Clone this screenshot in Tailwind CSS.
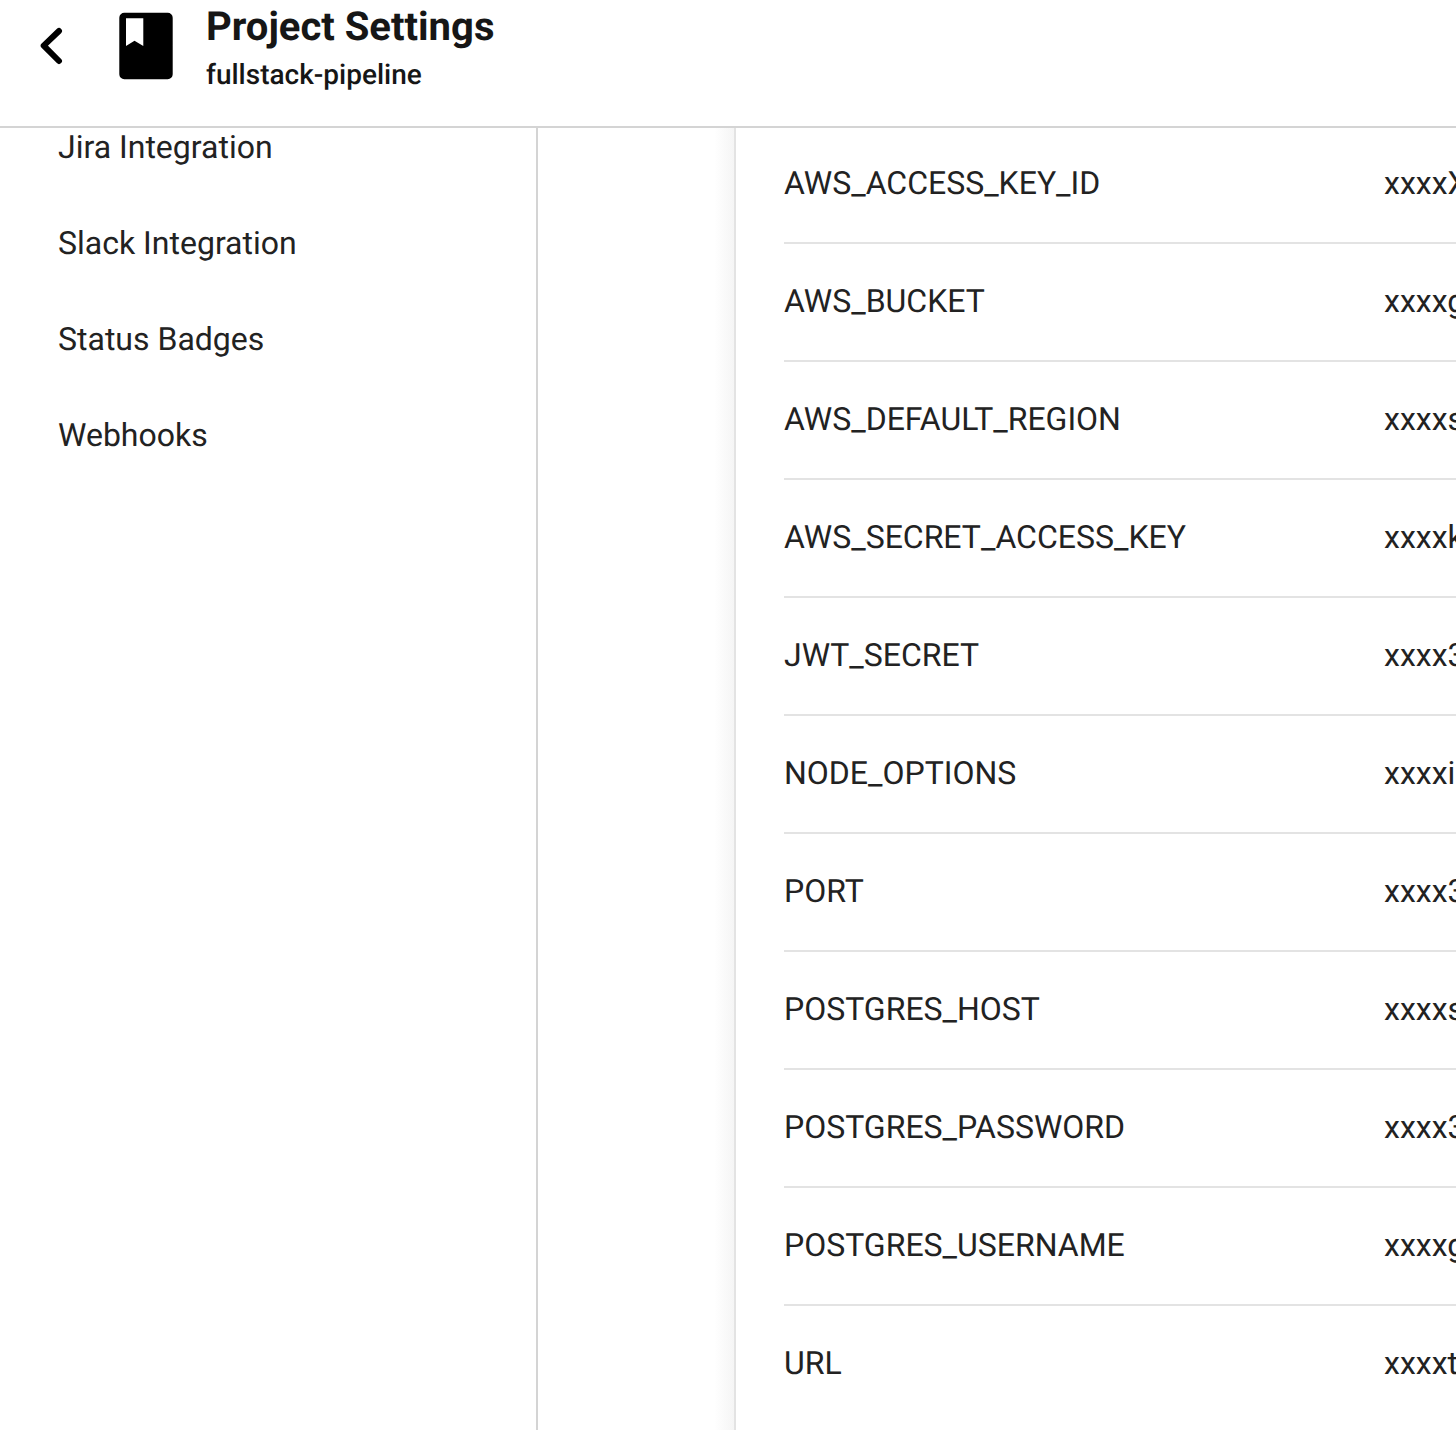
<!DOCTYPE html>
<html>
<head>
<meta charset="utf-8">
<script src="https://cdn.jsdelivr.net/npm/@tailwindcss/browser@4"></script>
</head>
<body class="bg-white">
<div class="w-[1456px] h-[1430px] overflow-hidden flex flex-col font-['Roboto',sans-serif] text-[#161616] [text-rendering:geometricPrecision] antialiased">
  <header class="h-[128px] shrink-0 border-b-2 border-[#d4d4d4] flex items-start bg-white relative z-10">
    <svg class="ml-[40px] mt-[27px] w-[24px] h-[38px] shrink-0" viewBox="0 0 24 38" fill="none"><path d="M19 4 3.7 18.7 19 34" stroke="#000" stroke-width="6" stroke-linecap="round" stroke-linejoin="round"/></svg>
    <svg class="ml-[55px] mt-[12px] w-[54px] h-[68px] shrink-0" viewBox="0 0 54 68"><path fill-rule="evenodd" d="M5.3 .7H48.7A5 5 0 0 1 53.7 5.7V62.3A5 5 0 0 1 48.7 67.3H5.3A5 5 0 0 1 .3 62.3V5.7A5 5 0 0 1 5.3 .7ZM7 6.3V34L15.5 28.7 24.3 34V6.3Z" fill="#000"/></svg>
    <div class="ml-[33px] flex flex-col">
      <div class="text-[40px] leading-[54px] font-bold whitespace-nowrap">Project Settings</div>
      <div class="text-[28px] leading-[40px] font-medium whitespace-nowrap pt-[1px]">fullstack-pipeline</div>
    </div>
  </header>
  <div class="flex flex-1 min-h-0">
    <nav class="w-[538px] shrink-0 border-r-2 border-[#d4d4d4] pl-[58px] text-[32px] text-[#222] overflow-hidden">
      <div class="-mt-[29px] flex flex-col">
        <div class="h-24 flex items-center">Jira Integration</div>
        <div class="h-24 flex items-center">Slack Integration</div>
        <div class="h-24 flex items-center">Status Badges</div>
        <div class="h-24 flex items-center">Webhooks</div>
      </div>
    </nav>
    <div class="w-[196px] shrink-0 bg-gradient-to-r from-white from-[90%] to-[#f5f5f5]"></div>
    <main class="flex-1 min-w-0 border-l-2 border-[#e3e3e3] pl-[48px] overflow-hidden text-[32px] text-[#222]">
      <div class="-mt-[2px] flex flex-col">
        <div class="h-[118px] shrink-0 flex items-center pb-[2px] border-b-2 border-[#e3e3e3] whitespace-nowrap"><span class="w-[600px] shrink-0">AWS_ACCESS_KEY_ID</span><span>xxxxXXXX</span></div>
        <div class="h-[118px] shrink-0 flex items-center pb-[2px] border-b-2 border-[#e3e3e3] whitespace-nowrap"><span class="w-[600px] shrink-0">AWS_BUCKET</span><span>xxxxgggg</span></div>
        <div class="h-[118px] shrink-0 flex items-center pb-[2px] border-b-2 border-[#e3e3e3] whitespace-nowrap"><span class="w-[600px] shrink-0">AWS_DEFAULT_REGION</span><span>xxxxssss</span></div>
        <div class="h-[118px] shrink-0 flex items-center pb-[2px] border-b-2 border-[#e3e3e3] whitespace-nowrap"><span class="w-[600px] shrink-0">AWS_SECRET_ACCESS_KEY</span><span>xxxxkkkk</span></div>
        <div class="h-[118px] shrink-0 flex items-center pb-[2px] border-b-2 border-[#e3e3e3] whitespace-nowrap"><span class="w-[600px] shrink-0">JWT_SECRET</span><span>xxxx3333</span></div>
        <div class="h-[118px] shrink-0 flex items-center pb-[2px] border-b-2 border-[#e3e3e3] whitespace-nowrap"><span class="w-[600px] shrink-0">NODE_OPTIONS</span><span>xxxxiiii</span></div>
        <div class="h-[118px] shrink-0 flex items-center pb-[2px] border-b-2 border-[#e3e3e3] whitespace-nowrap"><span class="w-[600px] shrink-0">PORT</span><span>xxxx3333</span></div>
        <div class="h-[118px] shrink-0 flex items-center pb-[2px] border-b-2 border-[#e3e3e3] whitespace-nowrap"><span class="w-[600px] shrink-0">POSTGRES_HOST</span><span>xxxxssss</span></div>
        <div class="h-[118px] shrink-0 flex items-center pb-[2px] border-b-2 border-[#e3e3e3] whitespace-nowrap"><span class="w-[600px] shrink-0">POSTGRES_PASSWORD</span><span>xxxx3333</span></div>
        <div class="h-[118px] shrink-0 flex items-center pb-[2px] border-b-2 border-[#e3e3e3] whitespace-nowrap"><span class="w-[600px] shrink-0">POSTGRES_USERNAME</span><span>xxxxgggg</span></div>
        <div class="h-[118px] shrink-0 flex items-center pb-[2px] border-b-2 border-transparent whitespace-nowrap"><span class="w-[600px] shrink-0">URL</span><span>xxxxtttt</span></div>
      </div>
    </main>
  </div>
</div>
</body>
</html>
